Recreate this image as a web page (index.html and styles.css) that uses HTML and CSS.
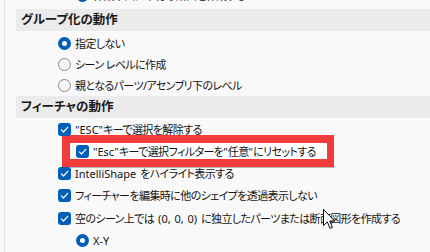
FILE: index.html
```html
<!DOCTYPE html>
<html lang="ja">
<head>
<meta charset="utf-8">
<link rel="stylesheet" href="styles.css">
</head>
<body>
<div class="panel">
  <div class="row sub partial">
    <span class="radio on"></span><span class="label">作業平面に平行な断面を作成する</span>
  </div>

  <div class="header">グループ化の動作</div>
  <div class="row radio-row">
    <span class="radio on"></span><span class="label">指定しない</span>
  </div>
  <div class="row radio-row">
    <span class="radio"></span><span class="label">シーン レベルに作成</span>
  </div>
  <div class="row radio-row">
    <span class="radio"></span><span class="label">親となるパーツ/アセンブリ下のレベル</span>
  </div>

  <div class="header">フィーチャの動作</div>
  <div class="row check-row">
    <span class="check"><svg viewBox="0 0 13 13" width="13" height="13"><rect x="0" y="0" width="13" height="13" rx="3" fill="#005fb8"/><path d="M3.4 6.9 L5.5 9 L9.7 4.3" fill="none" stroke="#fff" stroke-width="1.2" stroke-linecap="round" stroke-linejoin="round"/></svg></span>
    <span class="label"><span class="en">"ESC"</span>キーで選択を解除する</span>
  </div>
  <div class="highlight">
    <div class="row sub check-row">
      <span class="check"><svg viewBox="0 0 13 13" width="13" height="13"><rect x="0" y="0" width="13" height="13" rx="3" fill="#005fb8"/><path d="M3.4 6.9 L5.5 9 L9.7 4.3" fill="none" stroke="#fff" stroke-width="1.2" stroke-linecap="round" stroke-linejoin="round"/></svg></span>
      <span class="label"><span class="en">"Esc"</span>キーで選択フィルターを<span class="en">"</span>任意<span class="en">"</span>にリセットする</span>
    </div>
  </div>
  <div class="row check-row">
    <span class="check"><svg viewBox="0 0 13 13" width="13" height="13"><rect x="0" y="0" width="13" height="13" rx="3" fill="#005fb8"/><path d="M3.4 6.9 L5.5 9 L9.7 4.3" fill="none" stroke="#fff" stroke-width="1.2" stroke-linecap="round" stroke-linejoin="round"/></svg></span>
    <span class="label"><span class="en">IntelliShape </span>をハイライト表示する</span>
  </div>
  <div class="row check-row">
    <span class="check"><svg viewBox="0 0 13 13" width="13" height="13"><rect x="0" y="0" width="13" height="13" rx="3" fill="#005fb8"/><path d="M3.4 6.9 L5.5 9 L9.7 4.3" fill="none" stroke="#fff" stroke-width="1.2" stroke-linecap="round" stroke-linejoin="round"/></svg></span>
    <span class="label">フィーチャーを編集時に他のシェイプを透過表示しない</span>
  </div>
  <div class="row check-row">
    <span class="check"><svg viewBox="0 0 13 13" width="13" height="13"><rect x="0" y="0" width="13" height="13" rx="3" fill="#005fb8"/><path d="M3.4 6.9 L5.5 9 L9.7 4.3" fill="none" stroke="#fff" stroke-width="1.2" stroke-linecap="round" stroke-linejoin="round"/></svg></span>
    <span class="label">空のシーン上では<span class="en"> (0, 0, 0) </span>に独立したパーツまたは断面図形を作成する</span>
  </div>
  <div class="row sub radio-row last">
    <span class="radio on"></span><span class="label"><span class="en">X-Y</span></span>
  </div>

  <svg class="cursor" viewBox="0 0 13 21" width="13" height="21">
    <path d="M0.5 0.5 L0.5 16.5 L4.3 12.9 L7 19.3 L9.4 18.3 L6.8 12 L11.8 12 Z" fill="#fff" stroke="#000" stroke-width="1" stroke-linejoin="miter"/>
  </svg>
</div>
</body>
</html>
```

FILE: styles.css
```css
html, body {
  margin: 0;
  padding: 0;
  background: #f9f9f9;
  overflow: hidden;
}

body {
  width: 430px;
  height: 252px;
  font-family: "Noto Sans", "Noto Sans CJK JP", sans-serif;
  font-size: 11px;
  letter-spacing: -0.6px;
  color: #141414;
  font-feature-settings: "palt" 1;
}

.panel {
  position: relative;
  margin-left: 4px;
  margin-top: -16px;
  padding-left: 11px;
  border-left: 1px solid #e2e2e2;
  height: 268px;
}

.header {
  height: 22px;
  line-height: 22px;
  background: #ebebeb;
  padding-left: 5px;
  font-weight: bold;
  font-size: 12.5px;
  letter-spacing: 0;
  color: #1a1a1a;
}

.row {
  display: flex;
  align-items: center;
  padding-left: 42px;
  gap: 4px;
  white-space: nowrap;
}

.row.sub {
  padding-left: 60px;
}

.partial {
  height: 22px;
  margin-bottom: 3px;
}

.radio-row {
  height: 21px;
}

.header + .radio-row {
  margin-top: 2px;
}

.check-row {
  height: 22.4px;
}

.label {
  line-height: 1;
}

.en {
  letter-spacing: 0;
  word-spacing: 1px;
}

.radio {
  box-sizing: border-box;
  width: 13px;
  height: 13px;
  border-radius: 50%;
  border: 1px solid #8b8b8b;
  background: #f4f4f4;
  flex: none;
}

.radio.on {
  border: 4px solid #005fb8;
  background: #ffffff;
}

.check {
  width: 13px;
  height: 13px;
  flex: none;
  display: block;
}

.check svg {
  display: block;
}

.highlight {
  margin-left: 46px;
  width: 257px;
  margin-top: -5.4px;
  margin-bottom: -4.6px;
  border: 8px solid #f23b3b;
  border-right-width: 7px;
  background: #ffffff;
  box-shadow: 0 1px 0 #b9b9b9;
}

.highlight .row.sub {
  height: 16px;
  padding-left: 6px;
}

.cursor {
  position: absolute;
  left: 318px;
  top: 225px;
}
```
